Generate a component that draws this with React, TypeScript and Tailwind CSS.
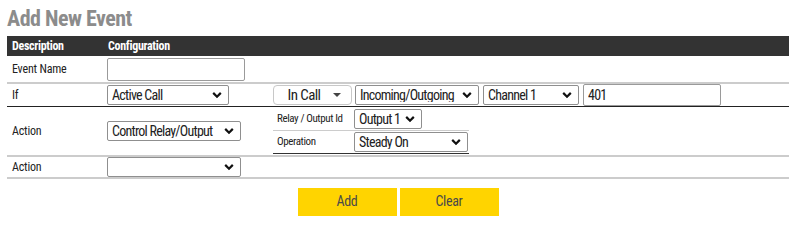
import React from "react";

const font = { fontFamily: '"Roboto Condensed", Roboto, sans-serif' };

function Chevron() {
  return (
    <svg width="10" height="7" viewBox="0 0 10 7" className="pointer-events-none absolute right-[7px] top-1/2 -translate-y-1/2">
      <path d="M1.2 1.4 L5 5.2 L8.8 1.4" fill="none" stroke="#111" strokeWidth="2.2" />
    </svg>
  );
}

type SelectProps = { value: string; options: string[]; className: string };

function Select({ value, options, className }: SelectProps) {
  return (
    <div className={`relative inline-block align-middle ${className}`}>
      <select
        defaultValue={value}
        className="h-full w-full appearance-none rounded-[2px] border border-[#8f8f8f] bg-white pl-[4px] pr-5 text-[14px] leading-none tracking-[-0.75px] text-[#222] outline-none"
      >
        {options.map((o) => (
          <option key={o}>{o}</option>
        ))}
      </select>
      <Chevron />
    </div>
  );
}

export default function App() {
  return (
    <div className="w-[800px] h-[226px] bg-white px-[7px] pt-[6px] text-[#222]" style={font}>
      <h1 className="text-[22px] font-bold leading-[26px] tracking-[-0.5px] text-[#8c8c8c]">Add New Event</h1>

      <table className="mt-[4px] w-[782px] border-collapse text-[12px] tracking-[-0.2px]">
        <thead>
          <tr className="h-[20px] bg-[#333333] text-left text-[12px] font-bold tracking-[-0.3px] text-white">
            <th className="w-[100px] pl-[5px] font-bold">Description</th>
            <th className="pl-[1px] font-bold">Configuration</th>
          </tr>
        </thead>
        <tbody>
          <tr className="h-[27px] border-b-2 border-[#cccccc]">
            <td className="pl-[5px]">Event Name</td>
            <td>
              <input className="block h-[23px] w-[138px] rounded-[2px] border border-[#9a9a9a] bg-white px-1 text-[14px]" />
            </td>
          </tr>
          <tr className="h-[23px] border-b border-[#222]">
            <td className="pl-[5px]">If</td>
            <td>
              <div className="flex items-center whitespace-nowrap">
                <Select value="Active Call" options={["Active Call"]} className="h-[20px] w-[122px]" />
                <button className="ml-[44px] flex h-[20px] w-[79px] items-center justify-center gap-[13px] rounded-[4px] border border-[#c8c8c8] bg-white pl-[4px] text-[15px] tracking-[-0.6px] text-[#222]">
                  <span>In Call</span>
                  <svg width="8" height="4" viewBox="0 0 8 4">
                    <path d="M0 0 H8 L4 4 Z" fill="#444" />
                  </svg>
                </button>
                <Select value="Incoming/Outgoing" options={["Incoming/Outgoing"]} className="ml-[3px] h-[20px] w-[124px]" />
                <Select value="Channel 1" options={["Channel 1"]} className="ml-[4px] h-[20px] w-[96px]" />
                <input
                  defaultValue="401"
                  className="ml-[4px] h-[22px] w-[138px] rounded-[2px] border border-[#9a9a9a] bg-white px-[4px] text-[14px] tracking-[-0.75px]"
                />
              </div>
            </td>
          </tr>
          <tr className="h-[49px] border-b-2 border-[#cccccc]">
            <td className="pl-[5px]">Action</td>
            <td>
              <div className="flex items-center whitespace-nowrap">
                <Select value="Control Relay/Output" options={["Control Relay/Output"]} className="h-[20px] w-[134px]" />
                <table className="ml-[32px] w-[196px] border-collapse border-b border-[#333] text-[11px] tracking-[-0.4px]">
                  <tbody>
                    <tr className="h-[23px] border-b border-[#cccccc]">
                      <td className="w-[81px] pl-[4px]">Relay / Output Id</td>
                      <td>
                        <Select value="Output 1" options={["Output 1"]} className="h-[20px] w-[68px]" />
                      </td>
                    </tr>
                    <tr className="h-[23px]">
                      <td className="pl-[4px]">Operation</td>
                      <td>
                        <Select value="Steady On" options={["Steady On"]} className="h-[20px] w-[114px]" />
                      </td>
                    </tr>
                  </tbody>
                </table>
              </div>
            </td>
          </tr>
          <tr className="h-[22px] border-b-2 border-[#cccccc]">
            <td className="pl-[5px]">Action</td>
            <td>
              <Select value="" options={[""]} className="h-[20px] w-[134px]" />
            </td>
          </tr>
        </tbody>
      </table>

      <div className="mt-[9px] flex justify-center gap-[3px] pr-[4px]">
        <button className="h-[28px] w-[99px] bg-[#ffd400] text-[14px] tracking-[-0.3px] text-[#4a4a4a]">Add</button>
        <button className="h-[28px] w-[99px] bg-[#ffd400] text-[14px] tracking-[-0.3px] text-[#4a4a4a]">Clear</button>
      </div>
    </div>
  );
}
